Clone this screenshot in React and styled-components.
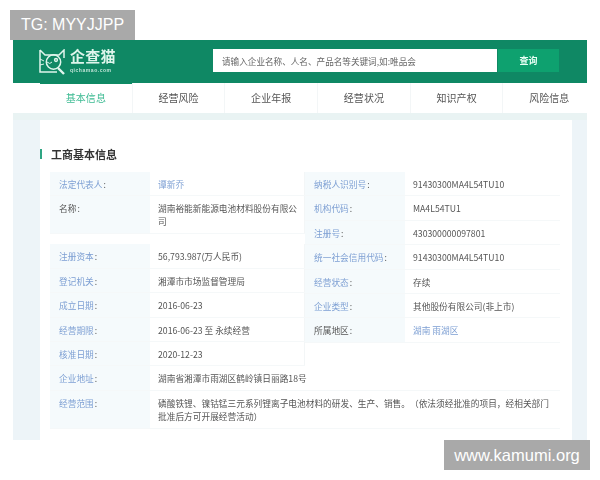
import React from "react";
import styled, { createGlobalStyle } from "styled-components";

const Global = createGlobalStyle`
  html, body { margin: 0; padding: 0; background: #fff; }
  body { font-family: "Noto Sans CJK SC", "Liberation Sans", sans-serif; text-spacing-trim: space-all; }
  #root { width: 600px; height: 480px; overflow: hidden; position: relative; }
`;

const Page = styled.div`
  padding: 40px 13px 0;
  width: 574px;
  height: 440px;
  filter: blur(0.45px);
`;
const Frame = styled.div`
  width: 574px;
  height: 400px;
  background: #edf4f8;
  overflow: hidden;
`;
const Header = styled.header`
  height: 43px;
  box-sizing: border-box;
  background: #0f8864;
  display: flex;
  align-items: flex-start;
  padding: 9px 28px 0 26px;
`;
const Logo = styled.div`
  width: 174px;
  display: flex;
  align-items: flex-start;
  gap: 3px;
  height: 26px;
  color: #dff5ec;
`;
const LogoText = styled.div`
  display: flex;
  flex-direction: column;
  gap: 4px;
  line-height: 1;
`;
const LogoName = styled.span`
  font-size: 15px;
  font-weight: 700;
  letter-spacing: 0.2px;
  line-height: 14px;
`;
const LogoUrl = styled.span`
  font-family: "Liberation Sans", sans-serif;
  font-size: 5px;
  letter-spacing: 0.55px;
  line-height: 6px;
  font-weight: 700;
  opacity: 0.85;
`;
const SearchBox = styled.div`
  width: 284px;
  height: 23px;
  background: #fff;
  display: flex;
  align-items: center;
  padding-left: 9px;
  box-sizing: border-box;
  font-size: 8.6px;
  color: #666;
`;
const SearchButton = styled.div`
  margin-left: 1px;
  width: 61px;
  height: 23px;
  background: #0ea16f;
  color: #e8fff5;
  font-size: 9px;
  font-weight: 700;
  display: flex;
  align-items: center;
  justify-content: center;
`;
const Nav = styled.nav`
  height: 30px;
  background: #fff;
  display: flex;
  padding-left: 27px;
`;
const NavItem = styled.div`
  width: 92.7px;
  flex: none;
  box-sizing: border-box;
  display: flex;
  align-items: center;
  justify-content: center;
  font-size: 10px;
  letter-spacing: 0.05px;
  color: ${(p) => (p.$active ? "#3dbb93" : "#555")};
  border-right: 1px solid #f3f6f7;
  box-shadow: ${(p) => (p.$active ? "inset 0 1px 0 #0d8a63" : "none")};
  padding-bottom: 2px;
`;
const Content = styled.div`
  padding: 7px 15px 0 27px;
  background: linear-gradient(#e9f3f3 0, #e9f3f3 7px, #edf4f8 7px);
`;
const Card = styled.section`
  width: 532px;
  height: 320px;
  box-sizing: border-box;
  background: #fff;
  padding-top: 28px;
`;
const SectionTitle = styled.h2`
  margin: 0 0 12px;
  height: 12px;
  display: flex;
  align-items: center;
  gap: 9px;
  font-size: 11px;
  line-height: 12px;
  font-weight: 700;
  color: #333;
  &::before {
    content: "";
    width: 2px;
    height: 10px;
    background: #2fa583;
  }
`;
const Table = styled.div`
  margin-left: 10px;
  width: 510px;
`;
const Columns = styled.div`
  display: flex;
`;
const Col = styled.div`
  width: 255px;
  flex: none;
  display: flex;
  flex-direction: column;
`;
const Group = styled.div`
  display: flex;
  flex-direction: column;
  margin-top: ${(p) => p.$gap || 0}px;
`;
const Row = styled.div`
  display: flex;
  min-height: ${(p) => p.$h || 24.4}px;
  border-bottom: 1px solid #f5f8f9;
  box-sizing: border-box;
`;
const Label = styled.div`
  flex: none;
  width: ${(p) => p.$w || 100}px;
  box-sizing: border-box;
  padding: 7px 0 0 9px;
  background: #f5fafc;
  font-size: 8.7px;
  line-height: 12px;
  color: ${(p) => (p.$dark ? "#555" : "#7d9fd3")};
  &::after {
    content: ":";
    color: #555;
    margin-left: 1px;
  }
`;
const Value = styled.div`
  flex: 1;
  box-sizing: border-box;
  padding: 6px 6px 0 8px;
  font-size: 8.7px;
  line-height: 13px;
  color: ${(p) => (p.$link ? "#7d9fd3" : "#555")};
  border-right: ${(p) => (p.$edge ? "1px solid #f3f6f7" : "none")};
`;
const Watermark = styled.div`
  position: absolute;
  background: #a9a9a9;
  color: #fff;
  font-family: "Liberation Sans", sans-serif;
  font-size: ${(p) => p.$size}px;
  display: flex;
  align-items: center;
  justify-content: center;
  left: ${(p) => p.$x}px;
  top: ${(p) => p.$y}px;
  width: ${(p) => p.$w}px;
  height: 30px;
`;

const CatLogo = () => (
  <svg width="28" height="26" viewBox="0 0 28 26" fill="none" stroke="currentColor" strokeWidth="1.5">
    <path d="M1 1 L6 6 H20 L25 1 V9 M1 1 V23 H18" />
    <path d="M1 10 L5 12 M1 16 L5 15" strokeWidth="1" />
    <circle cx="14.5" cy="13" r="7.2" />
    <circle cx="17" cy="11" r="1.4" />
    <path d="M8 13 Q11 16 13 13" strokeWidth="1" />
    <path d="M19 19 L25 25" strokeWidth="2.4" />
  </svg>
);

const navItems = ["基本信息", "经营风险", "企业年报", "经营状况", "知识产权", "风险信息"];

const Pair = ({ label, value, link, dark, h, w, edge }) => (
  <Row $h={h}>
    <Label $dark={dark} $w={w}>{label}</Label>
    <Value $link={link} $edge={edge}>{value}</Value>
  </Row>
);

export default function App() {
  return (
    <>
      <Global />
      <Page>
        <Frame>
          <Header>
            <Logo>
              <CatLogo />
              <LogoText>
                <LogoName>企查猫</LogoName>
                <LogoUrl>qichamao.com</LogoUrl>
              </LogoText>
            </Logo>
            <SearchBox>请输入企业名称、人名、产品名等关键词,如:唯品会</SearchBox>
            <SearchButton>查询</SearchButton>
          </Header>
          <Nav>
            {navItems.map((n, i) => (
              <NavItem key={n} $active={i === 0}>{n}</NavItem>
            ))}
          </Nav>
          <Content>
            <Card>
              <SectionTitle>工商基本信息</SectionTitle>
              <Table>
                <Columns>
                  <Col>
                    <Group>
                      <Pair edge label="法定代表人" value="谭新乔" link />
                      <Pair edge dark label="名称" value="湖南裕能新能源电池材料股份有限公司" h={38} />
                    </Group>
                    <Group $gap={10}>
                      <Pair edge label="注册资本" value="56,793.987(万人民币)" />
                      <Pair edge label="登记机关" value="湘潭市市场监督管理局" />
                      <Pair edge label="成立日期" value="2016-06-23" />
                      <Pair edge label="经营期限" value="2016-06-23 至 永续经营" />
                      <Pair edge label="核准日期" value="2020-12-23" />
                    </Group>
                  </Col>
                  <Col>
                    <Pair label="纳税人识别号" value="91430300MA4L54TU10" />
                    <Pair label="机构代码" value="MA4L54TU1" />
                    <Pair label="注册号" value="430300000097801" />
                    <Pair label="统一社会信用代码" value="91430300MA4L54TU10" />
                    <Pair label="经营状态" value="存续" />
                    <Pair label="企业类型" value="其他股份有限公司(非上市)" />
                    <Pair dark label="所属地区" value="湖南 雨湖区" link />
                  </Col>
                </Columns>
                <Pair label="企业地址" value="湖南省湘潭市雨湖区鹤岭镇日丽路18号" />
                <Pair
                  h={38}
                  label="经营范围"
                  value="磷酸铁锂、镍钴锰三元系列锂离子电池材料的研发、生产、销售。（依法须经批准的项目，经相关部门批准后方可开展经营活动）"
                />
              </Table>
            </Card>
          </Content>
        </Frame>
      </Page>
      <Watermark $x={10} $y={10} $w={125} $size={16}>TG: MYYJJPP</Watermark>
      <Watermark $x={444} $y={440} $w={146} $size={16.5}>www.kamumi.org</Watermark>
    </>
  );
}
